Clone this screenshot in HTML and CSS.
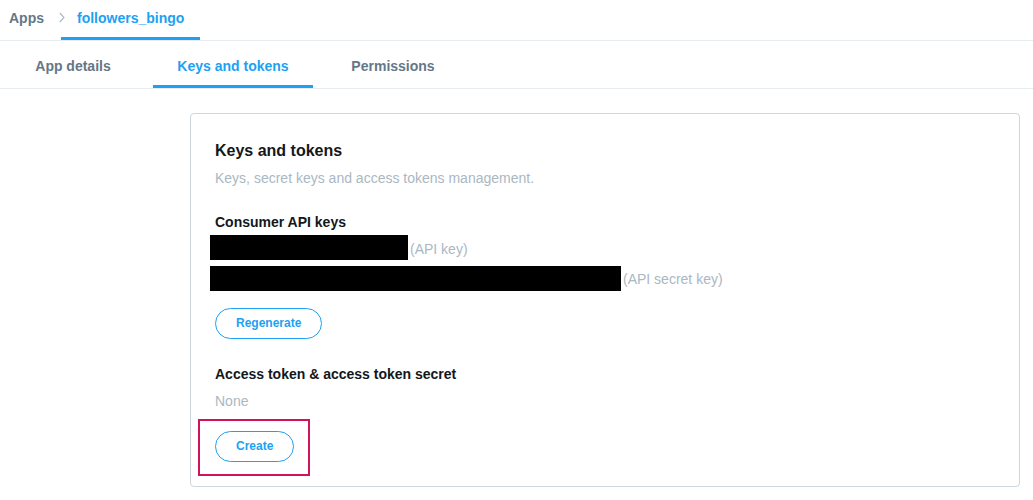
FILE: index.html
```html
<!DOCTYPE html>
<html lang="en">
<head>
<meta charset="utf-8">
<title>followers_bingo - Keys and tokens</title>
<link rel="stylesheet" href="styles.css">
</head>
<body>
  <nav class="crumbs">
    <span class="crumb">Apps</span>
    <svg class="sep" width="6" height="11" viewBox="0 0 6 11" aria-hidden="true"><path d="M0.8 1 L5 5.5 L0.8 10" fill="none" stroke="#aab8c2" stroke-width="1.1"/></svg>
    <span class="crumb crumb-active">followers_bingo</span>
  </nav>
  <nav class="tabs">
    <span class="tab">App details</span>
    <span class="tab tab-active">Keys and tokens</span>
    <span class="tab">Permissions</span>
  </nav>
  <main class="card">
    <h2 class="card-title">Keys and tokens</h2>
    <p class="card-sub">Keys, secret keys and access tokens management.</p>

    <h3 class="section-title">Consumer API keys</h3>
    <div class="key-row key-row-1">
      <span class="redact redact-short"></span><span class="key-label">(API key)</span>
    </div>
    <div class="key-row key-row-2">
      <span class="redact redact-long"></span><span class="key-label">(API secret key)</span>
    </div>
    <button class="pill pill-regen">Regenerate</button>

    <h3 class="section-title section-access">Access token &amp; access token secret</h3>
    <p class="none">None</p>
    <div class="create-wrap">
      <button class="pill">Create</button>
    </div>
  </main>
</body>
</html>
```

FILE: styles.css
```css
* { box-sizing: border-box; }
html, body { margin: 0; padding: 0; background: #fff; }
body {
  font-family: "Liberation Sans", Arial, Helvetica, sans-serif;
  color: #14171a;
  width: 1033px;
  height: 500px;
  overflow: hidden;
}

.crumbs {
  display: flex;
  align-items: flex-start;
  height: 41px;
  border-bottom: 1px solid #e6ecf0;
  padding-left: 9px;
}
.crumb {
  font-size: 14px;
  font-weight: bold;
  line-height: 20px;
  padding-top: 8px;
  height: 40px;
  color: #657786;
}
.sep {
  margin-left: 15px;
  margin-top: 12px;
  flex: none;
}
.crumb-active {
  color: #1da1f2;
  margin-left: -4px;
  padding-left: 16px;
  padding-right: 16px;
  border-bottom: 3px solid #1da1f2;
}

.tabs {
  display: flex;
  height: 48px;
  border-bottom: 1px solid #e6ecf0;
  margin-left: -7px;
}
.tab {
  width: 160px;
  text-align: center;
  font-size: 14px;
  font-weight: bold;
  line-height: 20px;
  padding-top: 15px;
  height: 47px;
  color: #657786;
}
.tab-active {
  color: #1da1f2;
  border-bottom: 3px solid #1da1f2;
}

.card {
  display: flex;
  flex-direction: column;
  align-items: flex-start;
  margin: 24px 0 0 190px;
  width: 830px;
  border: 1px solid #ccd6dd;
  border-radius: 4px;
  padding: 27px 24px 24px 24px;
}
.card-title {
  margin: 0;
  font-size: 16px;
  line-height: 20px;
  font-weight: bold;
}
.card-sub {
  margin: 7px 0 0;
  font-size: 14px;
  line-height: 20px;
  color: #aab8c2;
}
.section-title {
  margin: 24px 0 0;
  font-size: 14px;
  line-height: 20px;
  font-weight: bold;
  color: #14171a;
}
.key-row {
  display: flex;
  align-items: center;
  margin: 3px 0 0 -5px;
}
.key-row-2 { margin-top: 6px; }
.redact {
  display: block;
  height: 25px;
  background: #000;
}
.redact-short { width: 198px; }
.redact-long { width: 411px; }
.key-label {
  font-size: 14px;
  line-height: 20px;
  color: #aab8c2;
  margin-left: 2px;
}
.key-row-1 .key-label { padding-top: 3px; }
.pill {
  font-family: inherit;
  font-size: 12px;
  font-weight: bold;
  color: #1da1f2;
  background: #fff;
  border: 1px solid #1da1f2;
  border-radius: 100px;
  height: 31px;
  padding: 0 20px;
  line-height: 29px;
  cursor: pointer;
}
.pill-regen { margin-top: 17px; }
.section-access { margin-top: 25px; }
.none {
  margin: 7px 0 0;
  font-size: 14px;
  line-height: 20px;
  color: #aab8c2;
}
.create-wrap {
  position: relative;
  margin-top: 20px;
  display: flex;
}
.create-wrap::after {
  content: "";
  position: absolute;
  left: -17px;
  top: -12px;
  right: -16px;
  bottom: -14px;
  border: 2px solid #d0145a;
  pointer-events: none;
}
```
